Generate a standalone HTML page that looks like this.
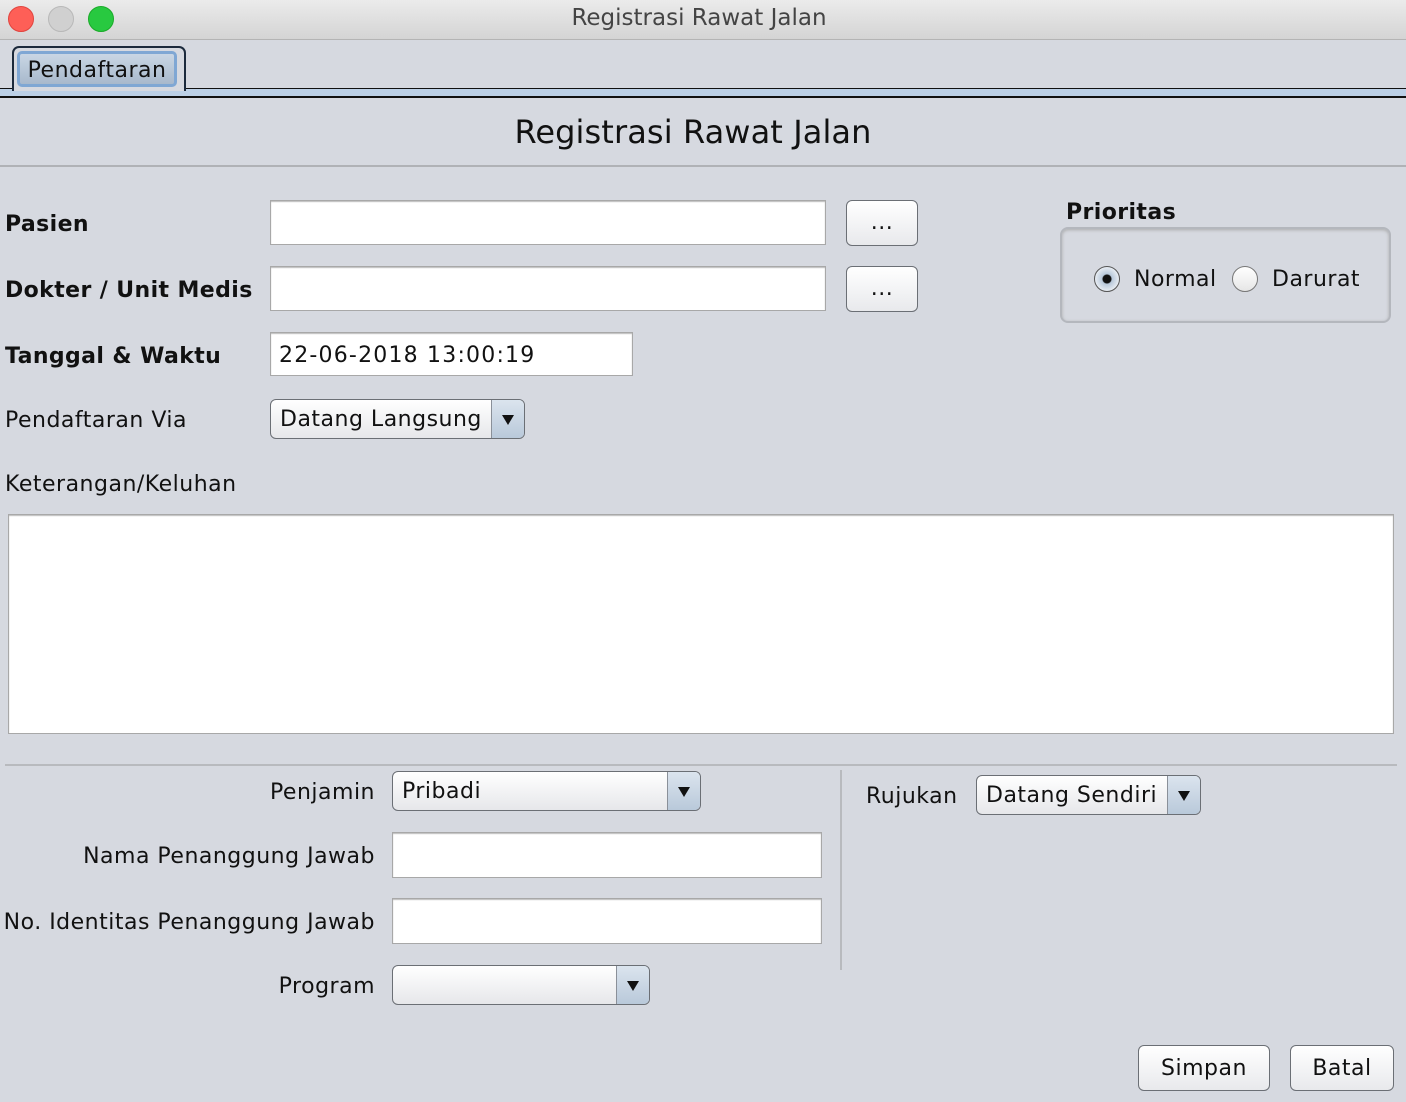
<!DOCTYPE html>
<html><head><style>
body{margin:0;width:1406px;height:1102px;background:#d6d9e0;font-family:"DejaVu Sans","Liberation Sans",sans-serif;font-size:22px;color:#111;position:relative;overflow:hidden;letter-spacing:0.5px}
.a{position:absolute;white-space:nowrap}
.tb{left:0;top:0;width:1406px;height:39px;background:linear-gradient(#ebebeb,#d4d4d4);border-bottom:1px solid #b4b4b4}
.dot{position:absolute;top:6px;width:24px;height:24px;border-radius:50%}
.inp{position:absolute;background:#fff;border:1px solid #a8a8a8;box-shadow:inset 0 1px 1px #bbb}
.btn{position:absolute;border:1px solid #6b6f75;border-radius:6px;background:linear-gradient(#fff,#e8e9ec);text-align:center}
.cb{position:absolute;border:1px solid #6b6f75;border-radius:6px;background:linear-gradient(#fff,#e6e7ea);box-sizing:border-box;padding-left:9px;line-height:40px}
.cb .ar{position:absolute;right:0;top:0;bottom:0;width:32px;border-left:1px solid #8a9099;background:linear-gradient(#dbe4ee,#b9c9da);border-radius:0 5px 5px 0}
.cb .ar:after{content:"";position:absolute;left:10px;top:15px;border-left:6px solid transparent;border-right:6px solid transparent;border-top:10px solid #111}
b{font-weight:bold;letter-spacing:0.4px}
</style></head><body>
<div class="a tb"></div>
<div class="dot" style="left:8px;background:#fe5f57;border:1px solid #e0443e"></div>
<div class="dot" style="left:48px;background:#d0d0d0;border:1px solid #b8b8b8"></div>
<div class="dot" style="left:88px;background:#28c940;border:1px solid #1aab29"></div>
<div class="a" style="left:0;width:1398px;text-align:center;top:5px;color:#444;font-family:'DejaVu Sans',sans-serif;font-size:23px;letter-spacing:0">Registrasi Rawat Jalan</div>
<div class="a" style="left:0;top:88px;width:1406px;height:7px;background:#bcd0e6;border-top:1px solid #111;border-bottom:2px solid #111"></div>
<div class="a" style="left:12px;top:46px;width:170px;height:43px;border:2px solid #1c2a3c;border-bottom:none;border-radius:7px 7px 0 0;background:#d6d9e0"></div>
<div class="a" style="left:17px;top:51px;width:160px;height:36px;border:3px solid #7fa7d4;border-radius:5px;background:linear-gradient(#c9d6e4,#a8b9cc);box-sizing:border-box;text-align:center;line-height:34px;font-size:22px">Pendaftaran</div>
<div class="a" style="left:0;width:1386px;text-align:center;top:113px;font-size:32px;letter-spacing:0.1px">Registrasi Rawat Jalan</div>
<div class="a" style="left:0;top:165px;width:1406px;height:2px;background:#b0b2b6"></div>

<div class="a" style="left:5px;top:212px"><b>Pasien</b></div>
<div class="inp" style="left:270px;top:200px;width:554px;height:43px"></div>
<div class="btn" style="left:846px;top:200px;width:70px;height:44px;line-height:44px">...</div>
<div class="a" style="left:5px;top:278px"><b>Dokter / Unit Medis</b></div>
<div class="inp" style="left:270px;top:266px;width:554px;height:43px"></div>
<div class="btn" style="left:846px;top:266px;width:70px;height:44px;line-height:44px">...</div>
<div class="a" style="left:5px;top:344px"><b>Tanggal &amp; Waktu</b></div>
<div class="inp" style="left:270px;top:332px;height:44px;line-height:46px;padding-left:8px;box-sizing:border-box;width:363px;letter-spacing:1.2px">22-06-2018 13:00:19</div>
<div class="a" style="left:5px;top:408px">Pendaftaran Via</div>
<div class="cb" style="left:270px;top:399px;width:255px;height:40px">Datang Langsung<div class="ar"></div></div>

<div class="a" style="left:1066px;top:200px"><b>Prioritas</b></div>
<div class="a" style="left:1060px;top:227px;width:327px;height:92px;border:2px solid #b4b7bd;border-radius:8px;box-shadow:inset 0 1px 3px #aaa"></div>
<div class="a" style="left:1094px;top:266px;width:24px;height:24px;border-radius:50%;border:1px solid #555;background:radial-gradient(#111 0 4px,#b8c8da 5px,#e8edf3 12px)"></div>
<div class="a" style="left:1134px;top:267px">Normal</div>
<div class="a" style="left:1232px;top:266px;width:24px;height:24px;border-radius:50%;border:1px solid #777;background:linear-gradient(#fff,#e6e6e6)"></div>
<div class="a" style="left:1272px;top:267px">Darurat</div>

<div class="a" style="left:5px;top:472px">Keterangan/Keluhan</div>
<div class="inp" style="left:8px;top:514px;width:1384px;height:218px"></div>
<div class="a" style="left:5px;top:764px;width:1392px;height:2px;background:#b8babe"></div>
<div class="a" style="left:840px;top:770px;width:2px;height:200px;background:#b8babe"></div>

<div class="a" style="left:0;width:375px;text-align:right;top:780px">Penjamin</div>
<div class="cb" style="left:392px;top:771px;width:309px;height:40px">Pribadi<div class="ar"></div></div>
<div class="a" style="left:0;width:375px;text-align:right;top:844px">Nama Penanggung Jawab</div>
<div class="inp" style="left:392px;top:832px;width:428px;height:44px"></div>
<div class="a" style="left:0;width:375px;text-align:right;top:910px">No. Identitas Penanggung Jawab</div>
<div class="inp" style="left:392px;top:898px;width:428px;height:44px"></div>
<div class="a" style="left:0;width:375px;text-align:right;top:974px">Program</div>
<div class="cb" style="left:392px;top:965px;width:258px;height:40px"><div class="ar"></div></div>

<div class="a" style="left:866px;top:784px">Rujukan</div>
<div class="cb" style="left:976px;top:775px;width:225px;height:40px">Datang Sendiri<div class="ar"></div></div>

<div class="btn" style="left:1138px;top:1045px;width:130px;height:44px;line-height:46px">Simpan</div>
<div class="btn" style="left:1290px;top:1045px;width:102px;height:44px;line-height:46px">Batal</div>
</body></html>
